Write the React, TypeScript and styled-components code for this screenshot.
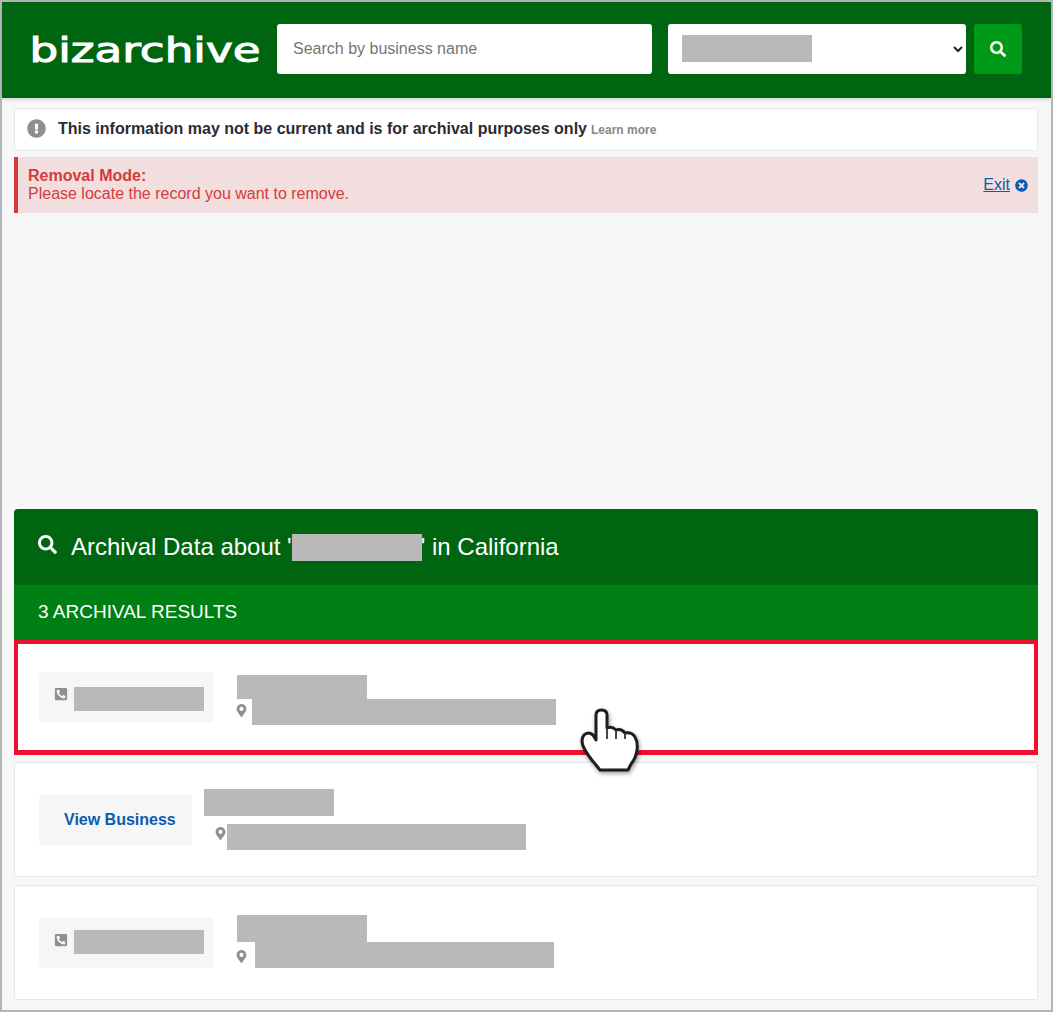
import React from "react";
import styled, { createGlobalStyle } from "styled-components";
import {
  FaExclamationCircle,
  FaMapMarkerAlt,
  FaPhoneSquareAlt,
  FaSearch,
  FaTimesCircle,
} from "react-icons/fa";

const Global = createGlobalStyle`
  html, body { margin: 0; padding: 0; background: #f7f7f7; }
  body { font-family: "Liberation Sans", Arial, sans-serif; }
  * { box-sizing: border-box; }
`;

const Frame = styled.div`
  position: relative;
  width: 1053px;
  height: 1012px;
  border: 2px solid #b4b4b4;
  background: #f7f7f7;
  overflow: hidden;
`;

const Header = styled.header`
  display: flex;
  align-items: center;
  height: 96px;
  padding: 0 29px 2px 27px;
  background: #006510;
  box-shadow: 0 1px 4px rgba(0, 0, 0, 0.2);
`;

const LogoMark = styled.svg`
  flex: 0 0 248px;
  width: 248px;
  height: 40px;
  display: block;
`;

const SearchInput = styled.input`
  width: 375px;
  height: 50px;
  padding: 0 16px;
  border: 0;
  border-radius: 3px;
  background: #fff;
  font: 16px "Liberation Sans", Arial, sans-serif;
  color: #333;
  &::placeholder { color: #757575; opacity: 1; }
`;

const SelectWrap = styled.div`
  position: relative;
  width: 298px;
  height: 50px;
  margin-left: 16px;
`;

const StateSelect = styled.select`
  width: 100%;
  height: 100%;
  padding: 0 10px;
  border: 0;
  border-radius: 3px;
  background: #fff;
  font: 16px "Liberation Sans", Arial, sans-serif;
  color: #222;
`;

const Redact = styled.span<{ $w: number; $h: number }>`
  display: block;
  flex: none;
  width: ${(p) => p.$w}px;
  height: ${(p) => p.$h}px;
  background: #b9b9b9;
`;

const SelectCover = styled(Redact)`
  position: absolute;
  left: 14px;
  top: 11px;
`;

const SearchButton = styled.button`
  display: flex;
  align-items: center;
  justify-content: center;
  width: 48px;
  height: 50px;
  margin-left: 8px;
  padding: 0;
  border: 0;
  border-radius: 3px;
  background: #009a19;
  color: #fff;
  font-size: 16px;
`;

const Main = styled.main`
  padding: 10px 13px 0 12px;
`;

const Notice = styled.div`
  display: flex;
  align-items: center;
  height: 43px;
  padding: 0 12px 2px;
  border: 1px solid #e6e6e6;
  border-radius: 3px;
  background: #fff;
  color: #8f8f8f;
  font-size: 19px;
`;

const NoticeText = styled.strong`
  margin-left: 12px;
  color: #2b2b33;
  font-size: 16px;
`;

const LearnMore = styled.span`
  margin-left: 4px;
  margin-top: 2px;
  color: #888;
  font-size: 12px;
  font-weight: 700;
`;

const Alert = styled.div`
  display: flex;
  align-items: center;
  justify-content: space-between;
  height: 56px;
  margin-top: 6px;
  padding: 0 10px;
  border-left: 4px solid #d33c3c;
  background: #f2dede;
  color: #d33c3c;
  font-size: 16px;
  line-height: 18px;
`;

const AlertTitle = styled.strong`
  display: block;
`;

const ExitLink = styled.a`
  display: flex;
  align-items: center;
  gap: 5px;
  color: #0b5cb0;
  font-size: 16px;
  text-decoration: none;
  & > span { text-decoration: underline; }
  & > svg { font-size: 13px; }
`;

const Results = styled.section`
  margin-top: 296px;
`;

const ResultsTitle = styled.h1`
  display: flex;
  align-items: center;
  height: 76px;
  margin: 0;
  padding: 0 24px;
  border-radius: 4px 4px 0 0;
  background: #006510;
  color: #fff;
  font-size: 24px;
  font-weight: 400;
  white-space: pre;
  & > svg { font-size: 19px; margin: -6px 14px 0 0; }
`;

const InlineRedact = styled(Redact)`
  margin: 0 -1px 0 0;
  position: relative;
`;

const ResultsCount = styled.div`
  display: flex;
  align-items: center;
  height: 55px;
  padding: 0 24px 2px;
  background: #007f15;
  color: #fff;
  font-size: 19px;
`;

const Card = styled.article<{ $active?: boolean; $gap?: number }>`
  display: flex;
  align-items: center;
  height: 115px;
  margin-bottom: ${(p) => p.$gap ?? 8}px;
  padding-left: 24px;
  border: 1px solid #e6e6e6;
  border-radius: 2px;
  background: #fff;
  ${(p) =>
    p.$active
      ? "border-radius: 0; border-color: #f00f2f; box-shadow: inset 0 0 0 3px #f00f2f, inset 0 -1px 0 3px #f00f2f;"
      : ""}
`;

const Pill = styled.div<{ $w: number; $up?: number }>`
  display: flex;
  align-items: center;
  flex: none;
  width: ${(p) => p.$w}px;
  height: 50px;
  margin-top: ${(p) => -(p.$up ?? 0) * 2}px;
  padding-left: 15px;
  border-radius: 3px;
  background: #f6f6f6;
`;

const PhoneGlyph = styled(FaPhoneSquareAlt)`
  flex: none;
  font-size: 14px;
  margin: -6px 6px 0 0;
  color: #8f8f8f;
`;

const PhoneRedact = styled(Redact)<{ $mt: number }>`
  margin-top: ${(p) => p.$mt}px;
`;

const ViewLink = styled.a`
  margin-left: 10px;
  color: #0b5cb0;
  font-size: 16px;
  font-weight: 700;
`;

const Info = styled.div<{ $left: number; $top: number }>`
  display: flex;
  flex-direction: column;
  margin-left: ${(p) => p.$left}px;
  align-self: flex-start;
  margin-top: ${(p) => p.$top}px;
`;

const AddressRow = styled.div<{ $indent?: number; $gap: number; $mt?: number; $pin: number }>`
  display: flex;
  align-items: flex-start;
  gap: ${(p) => p.$gap}px;
  margin-top: ${(p) => p.$mt ?? 0}px;
  padding-left: ${(p) => p.$indent ?? 0}px;
  & > svg {
    flex: none;
    margin-left: -2px;
    margin-top: ${(p) => p.$pin}px;
    font-size: 13px;
    color: #8f8f8f;
  }
`;

const HandCursor = styled.svg`
  position: absolute;
  left: 558px;
  top: 688px;
  width: 100px;
  height: 100px;
  filter: blur(0.5px) drop-shadow(1px 2px 2px rgba(0, 0, 0, 0.4));
`;

export default function App() {
  return (
    <>
      <Global />
      <Frame>
        <Header>
          <LogoMark viewBox="0 0 248 40" aria-label="bizarchive">
            <text
              x="0.5"
              y="33"
              textLength="231"
              lengthAdjust="spacingAndGlyphs"
              fill="#fff"
              stroke="#fff"
              strokeWidth="1"
              fontFamily='"DejaVu Sans", sans-serif'
              fontSize="33"
            >
              bizarchive
            </text>
          </LogoMark>
          <SearchInput placeholder="Search by business name" />
          <SelectWrap>
            <StateSelect>
              <option></option>
            </StateSelect>
            <SelectCover $w={130} $h={27} />
          </SelectWrap>
          <SearchButton aria-label="Search">
            <FaSearch />
          </SearchButton>
        </Header>
        <Main>
          <Notice>
            <FaExclamationCircle />
            <NoticeText>This information may not be current and is for archival purposes only</NoticeText>
            <LearnMore>Learn more</LearnMore>
          </Notice>
          <Alert>
            <div>
              <AlertTitle>Removal Mode:</AlertTitle>
              Please locate the record you want to remove.
            </div>
            <ExitLink>
              <span>Exit</span>
              <FaTimesCircle />
            </ExitLink>
          </Alert>
          <Results>
            <ResultsTitle>
              <FaSearch />
              Archival Data about '
              <InlineRedact $w={130} $h={27} />
              ' in California
            </ResultsTitle>
            <ResultsCount>3 ARCHIVAL RESULTS</ResultsCount>
            <Card $active $gap={7}>
              <Pill $w={175} $up={1}>
                <PhoneGlyph />
                <PhoneRedact $w={130} $h={24} $mt={4} />
              </Pill>
              <Info $left={23} $top={34}>
                <Redact $w={130} $h={24} />
                <AddressRow $gap={4} $pin={5}>
                  <FaMapMarkerAlt />
                  <Redact $w={304} $h={26} />
                </AddressRow>
              </Info>
            </Card>
            <Card>
              <Pill $w={153}>
                <ViewLink>View Business</ViewLink>
              </Pill>
              <Info $left={12} $top={26}>
                <Redact $w={130} $h={27} />
                <AddressRow $indent={12} $gap={0} $mt={8} $pin={3}>
                  <FaMapMarkerAlt />
                  <Redact $w={299} $h={26} />
                </AddressRow>
              </Info>
            </Card>
            <Card>
              <Pill $w={175}>
                <PhoneGlyph />
                <PhoneRedact $w={130} $h={24} $mt={-2} />
              </Pill>
              <Info $left={23} $top={29}>
                <Redact $w={130} $h={27} />
                <AddressRow $gap={7} $pin={8}>
                  <FaMapMarkerAlt />
                  <Redact $w={299} $h={26} />
                </AddressRow>
              </Info>
            </Card>
          </Results>
        </Main>
        <HandCursor viewBox="0 0 100 100">
          <path
            d="M36 50 V25 Q36 20 41.5 20 Q47 20 47 25 V38 Q52 36 56 40 Q61 38 65 43 Q72 42 75 47 Q78 52 77 60 Q76 68 71 74 L68 80 H40 L36 75 Q28 66 24 58 Q20 50 24 45 Q28 41 33 45 Z"
            fill="#fff"
            stroke="#1d1d1d"
            strokeWidth="3"
            strokeLinejoin="round"
          />
          <path d="M47 38 V49 M56 40 V49 M65 43 V49" fill="none" stroke="#333" strokeWidth="1.8" />
        </HandCursor>
      </Frame>
    </>
  );
}
